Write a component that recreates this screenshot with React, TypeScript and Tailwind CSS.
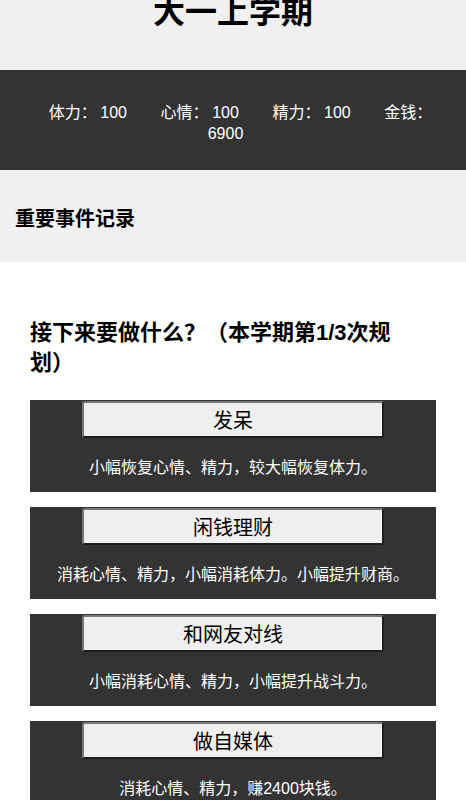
const font = "font-['Noto_Sans_CJK_SC','Liberation_Sans',sans-serif]";
const num = "font-['Liberation_Sans',sans-serif]";

const stats = [
  { label: "体力", value: 100 },
  { label: "心情", value: 100 },
  { label: "精力", value: 100 },
  { label: "金钱", value: 6900 },
];

const actions = [
  { name: "发呆", desc: <>小幅恢复心情、精力，较大幅恢复体力。</> },
  { name: "闲钱理财", desc: <>消耗心情、精力，小幅消耗体力。小幅提升财商。</> },
  { name: "和网友对线", desc: <>小幅消耗心情、精力，小幅提升战斗力。</> },
  { name: "做自媒体", desc: <>消耗心情、精力，赚<span className={`${num} leading-none`}>2400</span>块钱。</> },
];

export default function App() {
  return (
    <div lang="zh-CN" className={`${font} min-h-screen bg-white text-black`}>
      {/* Title */}
      <div className="h-[70px] bg-[#f0f0f0] overflow-hidden">
        <h1 className="-mt-[11px] text-center text-[32px] font-bold leading-[40px]">大一上学期</h1>
      </div>

      {/* Stats */}
      <div className="h-[100px] bg-[#333333] px-[20px] pt-[32px] text-center text-[16px] leading-[18.5px] text-white">
        {stats.map((s) => (
          <span key={s.label}>
            <span className="mx-[15px]">
              {s.label}： <span className={num}>{s.value}</span>
            </span>{" "}
          </span>
        ))}
      </div>

      {/* Events */}
      <div className="h-[92px] bg-[#f0f0f0] pl-[15px] pt-[36px]">
        <h3 className="text-[20px] font-bold leading-[24px]">重要事件记录</h3>
      </div>

      {/* Plan */}
      <div className="px-[30px] pt-[53px]">
        <h2 className="max-w-[385px] text-[22px] font-bold leading-[30px]">
          接下来要做什么？（本学期第<span className={`${num} leading-none`}>1/3</span>次规划）
        </h2>
        <div className="mt-[25px] flex flex-col gap-[15px]">
          {actions.map((a) => (
            <div key={a.name} className="flex flex-col items-center bg-[#333333] pt-[1px] pb-[16px]">
              <button className="h-[37px] w-[302px] rounded-[3px] border-2 border-t-[#777777] border-l-[#777777] border-b-[#1e1e1e] border-r-[#1e1e1e] bg-[#efefef] text-[20px] leading-[24px] text-black">
                {a.name}
              </button>
              <p className="mt-[18px] text-center text-[16px] leading-[20px] text-white">{a.desc}</p>
            </div>
          ))}
        </div>
      </div>
    </div>
  );
}
